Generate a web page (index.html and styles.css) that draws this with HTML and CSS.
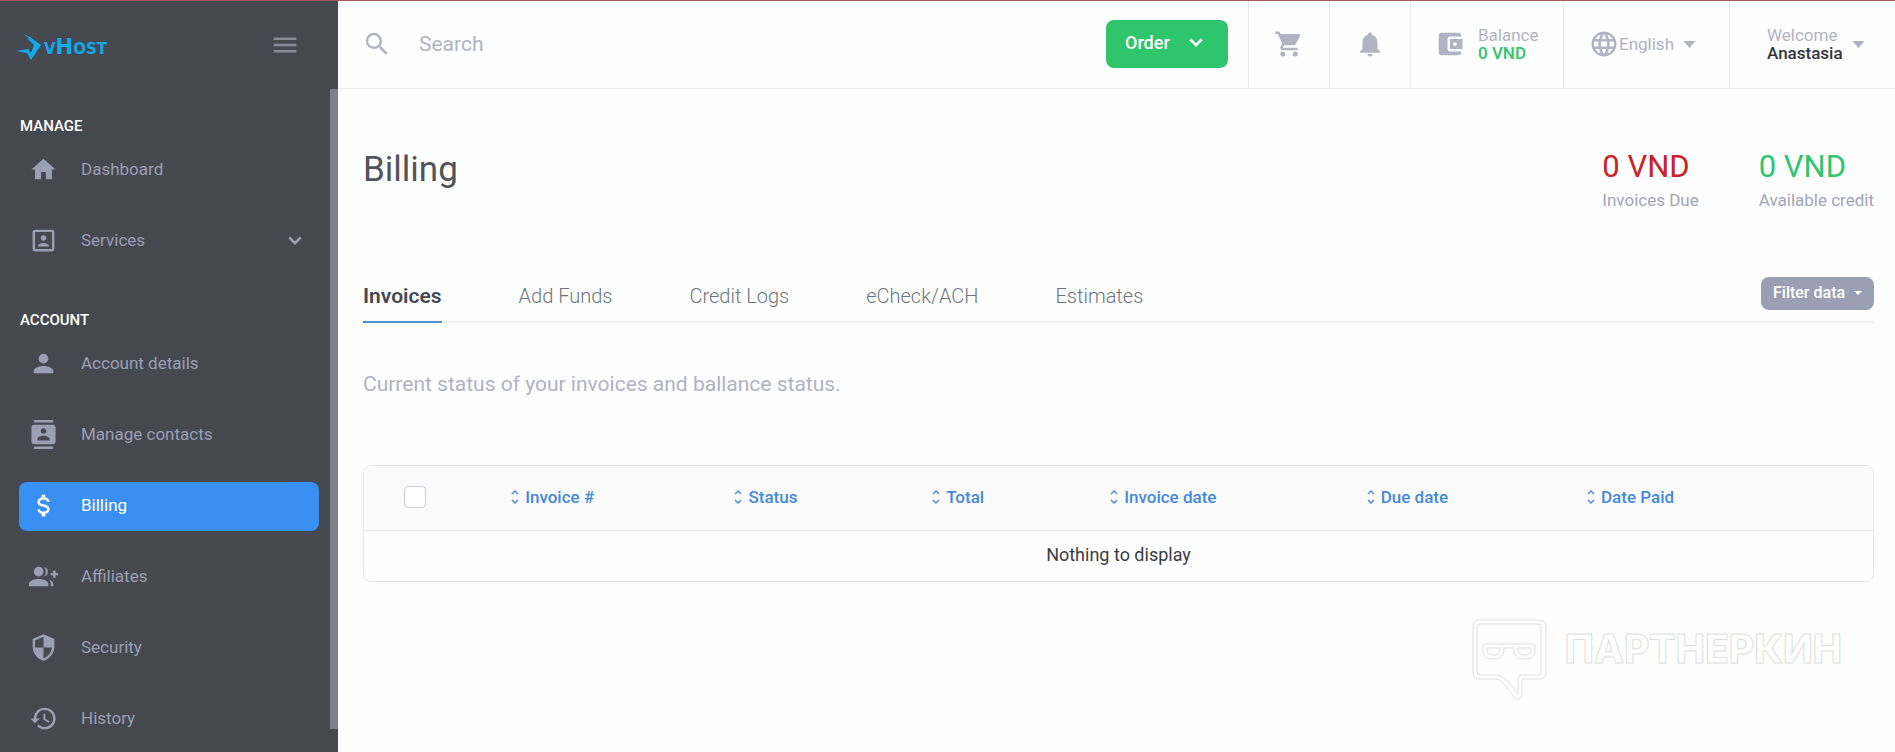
FILE: index.html
```html
<!DOCTYPE html>
<html lang="en">
<head>
    <meta charset="UTF-8">
    <meta name="viewport" content="width=device-width, initial-scale=1.0">
    <title>Billing</title>
    <link rel="stylesheet" href="styles.css">
</head>
<body>

    <aside class="sidebar">
        <div class="sidebar-top">
            <a class="logo" href="#">
                <svg class="logo-mark" viewBox="0 0 26 27">
                    <path d="M7 0L14 3L25 11L15 26L11 19L0 17L12 15L15 19L18 11L11 4L14 5Z"/>
                </svg>
                <span class="logo-text">vHost</span>
            </a>
            <button class="menu-button" aria-label="Toggle menu">
                <svg class="icon" viewBox="0 0 24 24"><path d="M3 6H21V8H3V6M3 11H21V13H3V11M3 16H21V18H3V16Z"/></svg>
            </button>
        </div>

        <nav class="nav">
            <h2>MANAGE</h2>
            <a class="nav-item" href="#">
                <svg class="nav-icon" viewBox="0 0 24 24"><path d="M10,20V14H14V20H19V12H22L12,3L2,12H5V20H10Z"/></svg>
                <span>Dashboard</span>
            </a>
            <a class="nav-item" href="#">
                <svg class="nav-icon" viewBox="0 0 24 24"><path d="M19,19H5V5H19M19,3H5A2,2 0 0,0 3,5V19A2,2 0 0,0 5,21H19A2,2 0 0,0 21,19V5A2,2 0 0,0 19,3M16.5,16.25C16.5,14.75 13.5,14 12,14C10.5,14 7.5,14.75 7.5,16.25V17H16.5M12,12.25A2.25,2.25 0 0,0 14.25,10A2.25,2.25 0 0,0 12,7.75A2.25,2.25 0 0,0 9.75,10A2.25,2.25 0 0,0 12,12.25Z"/></svg>
                <span>Services</span>
                <svg class="chevron" viewBox="0 0 16 10"><path d="M1.5 1.5L8 8L14.5 1.5"/></svg>
            </a>

            <h2>ACCOUNT</h2>
            <a class="nav-item" href="#">
                <svg class="nav-icon" viewBox="0 0 24 24"><path d="M12,4A4,4 0 0,1 16,8A4,4 0 0,1 12,12A4,4 0 0,1 8,8A4,4 0 0,1 12,4M12,14C16.42,14 20,15.79 20,18V20H4V18C4,15.79 7.58,14 12,14Z"/></svg>
                <span>Account details</span>
            </a>
            <a class="nav-item" href="#">
                <svg class="nav-icon" viewBox="0 0 24 24"><path d="M20,0H4V2H20V0M4,24H20V22H4V24M20,4H4A2,2 0 0,0 2,6V18A2,2 0 0,0 4,20H20A2,2 0 0,0 22,18V6A2,2 0 0,0 20,4M12,6.75A2.25,2.25 0 0,1 14.25,9A2.25,2.25 0 0,1 12,11.25A2.25,2.25 0 0,1 9.75,9A2.25,2.25 0 0,1 12,6.75M17,17H7V15.5C7,13.83 10.33,13 12,13C13.67,13 17,13.83 17,15.5V17Z"/></svg>
                <span>Manage contacts</span>
            </a>
            <a class="nav-item active" href="#" aria-current="page">
                <svg class="nav-icon" viewBox="0 0 24 24"><path d="M7,15H9C9,16.08 10.37,17 12,17C13.63,17 15,16.08 15,15C15,13.9 13.96,13.5 11.76,12.97C9.64,12.44 7,11.78 7,9C7,7.21 8.47,5.69 10.5,5.18V3H13.5V5.18C15.53,5.69 17,7.21 17,9H15C15,7.92 13.63,7 12,7C10.37,7 9,7.92 9,9C9,10.1 10.04,10.5 12.24,11.03C14.36,11.56 17,12.22 17,15C17,16.79 15.53,18.31 13.5,18.82V21H10.5V18.82C8.47,18.31 7,16.79 7,15Z"/></svg>
                <span>Billing</span>
            </a>
            <a class="nav-item" href="#">
                <svg class="nav-icon" viewBox="0 0 24 24"><path d="M8,4A4,4 0 1,1 8,12A4,4 0 1,1 8,4M8,14C12.42,14 16,15.79 16,18V20H0V18C0,15.79 3.58,14 8,14M12.5,4.1A4,4 0 0,1 12.5,11.9A6,6 0 0,0 12.5,4.1M16.5,14.5C18.6,15.2 20,16.5 20,18V20H18V18C18,16.6 17.5,15.4 16.5,14.5M20,7H22V9H24V11H22V13H20V11H18V9H20Z"/></svg>
                <span>Affiliates</span>
            </a>
            <a class="nav-item" href="#">
                <svg class="nav-icon" viewBox="0 0 24 24"><path d="M12,12H19C18.47,16.11 15.72,19.78 12,20.92V12H5V6.3L12,3.19M12,1L3,5V11C3,16.55 6.84,21.73 12,23C17.16,21.73 21,16.55 21,11V5L12,1Z"/></svg>
                <span>Security</span>
            </a>
            <a class="nav-item" href="#">
                <svg class="nav-icon" viewBox="0 0 24 24"><path d="M13.5,8H12V13L16.28,15.54L17,14.33L13.5,12.25V8M13,3A9,9 0 0,0 4,12H1L4.96,16.03L9,12H6A7,7 0 0,1 13,5A7,7 0 0,1 20,12A7,7 0 0,1 13,19C11.07,19 9.32,18.21 8.06,16.94L6.64,18.36C8.27,20 10.5,21 13,21A9,9 0 0,0 22,12A9,9 0 0,0 13,3"/></svg>
                <span>History</span>
            </a>
            <div class="scrollbar"></div>
        </nav>
    </aside>

    <div class="page">
        <header class="topbar">
            <label class="search">
                <svg class="icon" viewBox="0 0 24 24"><path d="M9.5,3A6.5,6.5 0 0,1 16,9.5C16,11.11 15.41,12.59 14.44,13.73L14.71,14H15.5L20.5,19L19,20.5L14,15.5V14.71L13.73,14.44C12.59,15.41 11.11,16 9.5,16A6.5,6.5 0 0,1 3,9.5A6.5,6.5 0 0,1 9.5,3M9.5,5C7,5 5,7 5,9.5C5,12 7,14 9.5,14C12,14 14,12 14,9.5C14,7 12,5 9.5,5Z"/></svg>
                <input type="text" placeholder="Search" aria-label="Search">
            </label>
            <button class="order-button">
                Order
                <svg class="chevron" viewBox="0 0 16 10"><path d="M1.5 1.5L8 8L14.5 1.5"/></svg>
            </button>
            <a class="topbar-cell square" href="#" aria-label="Cart">
                <svg class="icon" viewBox="0 0 24 24"><path d="M17,18C15.89,18 15,18.89 15,20A2,2 0 0,0 17,22A2,2 0 0,0 19,20C19,18.89 18.1,18 17,18M1,2V4H3L6.6,11.59L5.24,14.04C5.09,14.32 5,14.65 5,15A2,2 0 0,0 7,17H19V15H7.42A0.25,0.25 0 0,1 7.17,14.75C7.17,14.7 7.18,14.66 7.2,14.63L8.1,13H15.55C16.3,13 16.96,12.58 17.3,11.97L20.88,5.5C20.95,5.34 21,5.17 21,5A1,1 0 0,0 20,4H5.21L4.27,2M7,18C5.89,18 5,18.89 5,20A2,2 0 0,0 7,22A2,2 0 0,0 9,20C9,18.89 8.1,18 7,18Z"/></svg>
            </a>
            <a class="topbar-cell square" href="#" aria-label="Notifications">
                <svg class="icon" viewBox="0 0 24 24"><path d="M12 22c1.1 0 2-.9 2-2h-4c0 1.1.89 2 2 2zm6-6v-5c0-3.07-1.64-5.64-4.5-6.32V4c0-.83-.67-1.5-1.5-1.5s-1.5.67-1.5 1.5v.68C7.63 5.36 6 7.92 6 11v5l-2 2v1h16v-1l-2-2z"/></svg>
            </a>
            <a class="topbar-cell balance" href="#">
                <svg class="icon" viewBox="0 0 24 24"><path d="M21 18v1c0 1.1-.9 2-2 2H5c-1.11 0-2-.9-2-2V5c0-1.1.89-2 2-2h14c1.1 0 2 .9 2 2v1h-9c-1.11 0-2 .9-2 2v8c0 1.1.89 2 2 2h9zm-9-2h10V8H12v8zm4-2.5c-.83 0-1.5-.67-1.5-1.5s.67-1.5 1.5-1.5 1.5.67 1.5 1.5-.67 1.5-1.5 1.5z"/></svg>
                <span class="two-lines">
                    <span>Balance</span>
                    <strong class="green">0 VND</strong>
                </span>
            </a>
            <label class="topbar-cell language">
                <svg class="icon" viewBox="0 0 24 24"><path d="M11.99 2C6.47 2 2 6.48 2 12s4.47 10 9.99 10C17.52 22 22 17.52 22 12S17.52 2 11.99 2zm6.93 6h-2.95c-.32-1.25-.78-2.45-1.38-3.56 1.84.63 3.37 1.91 4.33 3.56zM12 4.04c.83 1.2 1.48 2.53 1.91 3.96h-3.82c.43-1.43 1.08-2.76 1.91-3.96zM4.26 14C4.1 13.36 4 12.69 4 12s.1-1.36.26-2h3.38c-.08.66-.14 1.32-.14 2 0 .68.06 1.34.14 2H4.26zm.82 2h2.95c.32 1.25.78 2.45 1.38 3.56-1.84-.63-3.37-1.9-4.33-3.56zm2.95-8H5.08c.96-1.66 2.49-2.93 4.33-3.56C8.81 5.55 8.35 6.75 8.03 8zM12 19.96c-.83-1.2-1.48-2.53-1.91-3.96h3.82c-.43 1.43-1.08 2.76-1.91 3.96zM14.34 14H9.66c-.09-.66-.16-1.32-.16-2 0-.68.07-1.35.16-2h4.68c.09.65.16 1.32.16 2 0 .68-.07 1.34-.16 2zm.25 5.56c.6-1.11 1.06-2.31 1.38-3.56h2.95c-.96 1.65-2.49 2.93-4.33 3.56zM16.36 14c.08-.66.14-1.32.14-2 0-.68-.06-1.34-.14-2h3.38c.16.64.26 1.31.26 2s-.1 1.36-.26 2h-3.38z"/></svg>
                <select aria-label="Language">
                    <option>English</option>
                </select>
                <svg class="caret" viewBox="0 0 12 7"><path d="M0 0H12L6 7Z"/></svg>
            </label>
            <button class="topbar-cell user">
                <span class="two-lines">
                    <span>Welcome</span>
                    <strong>Anastasia</strong>
                </span>
                <svg class="caret" viewBox="0 0 12 7"><path d="M0 0H12L6 7Z"/></svg>
            </button>
        </header>

        <main class="content">
            <div class="heading">
                <h1>Billing</h1>
                <div class="totals">
                    <div class="total">
                        <p class="amount red">0 VND</p>
                        <p class="label">Invoices Due</p>
                    </div>
                    <div class="total">
                        <p class="amount green">0 VND</p>
                        <p class="label">Available credit</p>
                    </div>
                </div>
            </div>

            <div class="tabs">
                <a class="tab active" href="#">Invoices</a>
                <a class="tab" href="#">Add Funds</a>
                <a class="tab" href="#">Credit Logs</a>
                <a class="tab" href="#">eCheck/ACH</a>
                <a class="tab" href="#">Estimates</a>
                <button class="filter-button">
                    Filter data
                    <svg viewBox="0 0 8 4"><path d="M0 0H8L4 4Z"/></svg>
                </button>
            </div>

            <p class="description">Current status of your invoices and ballance status.</p>

            <div class="table-box">
                <table>
                    <thead>
                        <tr>
                            <th class="col-check"><input type="checkbox" aria-label="Select all invoices"></th>
                            <th class="col-number"><a href="#"><svg class="sort" viewBox="0 0 8 14"><path d="M1 4L4 1L7 4M1 10L4 13L7 10"/></svg>Invoice #</a></th>
                            <th class="col-status"><a href="#"><svg class="sort" viewBox="0 0 8 14"><path d="M1 4L4 1L7 4M1 10L4 13L7 10"/></svg>Status</a></th>
                            <th class="col-total"><a href="#"><svg class="sort" viewBox="0 0 8 14"><path d="M1 4L4 1L7 4M1 10L4 13L7 10"/></svg>Total</a></th>
                            <th class="col-date"><a href="#"><svg class="sort" viewBox="0 0 8 14"><path d="M1 4L4 1L7 4M1 10L4 13L7 10"/></svg>Invoice date</a></th>
                            <th class="col-due"><a href="#"><svg class="sort" viewBox="0 0 8 14"><path d="M1 4L4 1L7 4M1 10L4 13L7 10"/></svg>Due date</a></th>
                            <th><a href="#"><svg class="sort" viewBox="0 0 8 14"><path d="M1 4L4 1L7 4M1 10L4 13L7 10"/></svg>Date Paid</a></th>
                        </tr>
                    </thead>
                    <tbody>
                        <tr>
                            <td colspan="7">Nothing to display</td>
                        </tr>
                    </tbody>
                </table>
            </div>

            <div class="watermark">
                <svg viewBox="0 0 75 81">
                    <path d="M7 1H67Q74 1 74 8V53Q74 60 67 60H50V75Q50 80 46 80Q43 80 41 77C36 70 31 61 24 60H8Q1 60 1 53V8Q1 1 7 1Z"/>
                    <path d="M8 5H66Q69 5 69 8V53Q69 56 66 56H50Q46 56 46 60V75C41 69 34 57 25 56H8Q5 56 5 53V8Q5 5 8 5Z"/>
                    <path d="M12 25H61Q63 25 63 27V31C63 37 60 40 52 40C45 40 42 37 42 29H32C32 37 29 40 22 40C14 40 11 37 11 31V27Q11 25 12 25Z"/>
                    <path d="M15 29H28C28 34 26 36 22 36C17 36 15 34 15 31ZM46 29H59V31C59 34 57 36 52 36C48 36 46 34 46 29Z"/>
                </svg>
                <span>ПАРТНЕРКИН</span>
            </div>
        </main>
    </div>

</body>
</html>
```

FILE: styles.css
```css
* {
    margin: 0;
    padding: 0;
    box-sizing: border-box;
    font-family: Roboto, 'Liberation Sans', sans-serif;
}

body {
    display: flex;
    height: 100vh;
    overflow: hidden;
    border-top: 1px solid #a0585c;
    background: #fefefe;
    color: #3a3d45;
    font-size: 17px;
}

a {
    color: inherit;
    text-decoration: none;
}

button {
    border: none;
    background: none;
    cursor: pointer;
}

svg {
    display: block;
    flex-shrink: 0;
    fill: currentColor;
}

.icon {
    width: 30px;
    height: 30px;
}

.chevron {
    width: 14px;
    height: 9px;
    fill: none;
    stroke: currentColor;
    stroke-width: 3;
}

.caret {
    width: 13px;
    height: 7px;
}

.green {
    color: #2fc56d;
}

.red {
    color: #c8232c;
}

/* Sidebar */

.sidebar {
    display: flex;
    flex-direction: column;
    flex-shrink: 0;
    width: 338px;
    background: #464850;
    color: #9a9fb3;
}

.sidebar-top {
    display: flex;
    justify-content: space-between;
    align-items: center;
    height: 88px;
    padding: 0 38px 0 16px;
}

.logo {
    display: flex;
    align-items: center;
    gap: 2px;
    padding-top: 4px;
    color: #10a9e9;
}

.logo-mark {
    width: 26px;
    height: 27px;
}

.logo-text {
    font-family: 'DejaVu Sans', sans-serif;
    font-size: 21px;
    font-weight: bold;
    font-variant: small-caps;
}

.menu-button {
    color: #868996;
}

.nav {
    position: relative;
    flex: 1;
    min-height: 0;
    padding: 27px 19px 0;
}

.nav h2 {
    margin-bottom: 10px;
    padding-left: 1px;
    color: #fff;
    font-size: 15px;
    font-weight: 500;
    line-height: 20px;
}

.nav-item {
    display: flex;
    align-items: center;
    gap: 23px;
    height: 49px;
    margin-bottom: 22px;
    padding: 0 17px 3px 10px;
    border-radius: 8px;
}

.nav-item + h2 {
    margin-top: 44px;
}

.nav-item.active {
    background: #3990f2;
    color: #fff;
}

.nav-icon {
    width: 29px;
    height: 29px;
}

.nav-item .chevron {
    margin-left: auto;
}

.scrollbar {
    position: absolute;
    top: 0;
    right: 0;
    bottom: 23px;
    width: 8px;
    background: #7d7f8a;
}

/* Top bar */

.page {
    flex: 1;
    min-width: 0;
}

.topbar {
    display: flex;
    align-items: center;
    height: 88px;
    border-bottom: 1px solid #e9e9ec;
    color: #b0b3c1;
}

.search {
    display: flex;
    flex: 1;
    align-items: center;
    gap: 27px;
    padding: 0 0 2px 24px;
}

.search input {
    flex: 1;
    min-width: 0;
    border: none;
    outline: none;
    background: none;
    font-size: 21px;
}

.search input::placeholder {
    color: #b0b3c1;
}

.order-button {
    display: flex;
    justify-content: space-between;
    align-items: center;
    width: 122px;
    height: 48px;
    margin: 0 20px 2px 0;
    padding: 0 25px 3px 19px;
    border-radius: 8px;
    background: #2fc56d;
    color: #fff;
    font-size: 18px;
    font-weight: 500;
}

.topbar-cell {
    display: flex;
    align-items: center;
    align-self: stretch;
    padding-bottom: 1px;
    border-left: 1px solid #e9e9ec;
    color: inherit;
    font-size: 17px;
}

.square {
    justify-content: center;
    width: 81px;
}

.balance {
    gap: 13px;
    width: 153px;
    padding-left: 24px;
}

.two-lines {
    display: flex;
    flex-direction: column;
    line-height: 18px;
    text-align: left;
}

.two-lines strong {
    font-weight: 500;
}

.language {
    width: 166px;
    padding-left: 25px;
}

.language select {
    appearance: none;
    margin-right: 8px;
    border: none;
    background: none;
    color: inherit;
    font-size: 17px;
}

.user {
    gap: 9px;
    width: 166px;
    padding-left: 37px;
}

.user strong {
    color: #32353e;
}

/* Content */

.content {
    padding: 54px 21px 0 25px;
}

.heading {
    display: flex;
    justify-content: space-between;
}

h1 {
    color: #50545a;
    font-size: 35px;
    font-weight: 400;
    line-height: 54px;
}

.totals {
    display: flex;
    gap: 60px;
}

.amount {
    font-size: 31px;
    line-height: 48px;
}

.label {
    color: #a0a4b6;
    line-height: 18px;
}

.tabs {
    display: flex;
    align-items: flex-start;
    gap: 77px;
    margin-top: 68px;
    border-bottom: 2px solid #efefef;
}

.tab {
    height: 46px;
    margin-bottom: -2px;
    color: #6c757d;
    font-size: 20px;
    font-weight: 300;
    line-height: 38px;
}

.tab.active {
    border-bottom: 2px solid #4a8fd0;
    color: #464850;
    font-size: 21px;
    font-weight: 600;
}

.filter-button {
    display: flex;
    justify-content: space-between;
    align-items: center;
    width: 113px;
    height: 33px;
    margin-left: auto;
    padding: 0 12px 2px;
    border-radius: 8px;
    background: #9a9fb3;
    color: #fff;
    font-size: 16px;
    font-weight: 500;
}

.filter-button svg {
    width: 8px;
    height: 4px;
}

.description {
    margin-top: 46px;
    color: #b0b3c1;
    font-size: 21px;
    line-height: 30px;
}

.table-box {
    margin-top: 66px;
    overflow: hidden;
    border: 1px solid #e8e8ec;
    border-radius: 8px;
}

table {
    width: 100%;
    border-collapse: collapse;
    table-layout: fixed;
}

th {
    height: 64px;
    padding: 0 0 2px 40px;
    border-bottom: 1px solid #e8e8ec;
    background: #fbfbfc;
    color: #4389dc;
    font-size: 17px;
    font-weight: 500;
    text-align: left;
}

th a {
    display: flex;
    align-items: center;
    gap: 6px;
}

th input {
    display: block;
    appearance: none;
    width: 22px;
    height: 22px;
    border: 1px solid #c9ccd6;
    border-radius: 4px;
    background: #fff;
}

td {
    height: 51px;
    padding-bottom: 2px;
    font-size: 18px;
    text-align: center;
}

.sort {
    width: 8px;
    height: 14px;
    fill: none;
    stroke: currentColor;
    stroke-width: 1.4;
}

.col-check {
    width: 7.1%;
}

.col-number {
    width: 14.8%;
}

.col-status {
    width: 13.1%;
}

.col-total {
    width: 11.8%;
}

.col-date {
    width: 17%;
}

.col-due {
    width: 14.6%;
}

.watermark {
    display: flex;
    justify-content: flex-end;
    gap: 18px;
    margin-top: 37px;
    padding-right: 32px;
    color: transparent;
}

.watermark svg {
    width: 75px;
    height: 81px;
    stroke: #dedede;
}

.watermark span {
    font-family: Inter, sans-serif;
    font-size: 39px;
    font-weight: 800;
    line-height: 60px;
    -webkit-text-stroke: 1px #dedede;
}
```
